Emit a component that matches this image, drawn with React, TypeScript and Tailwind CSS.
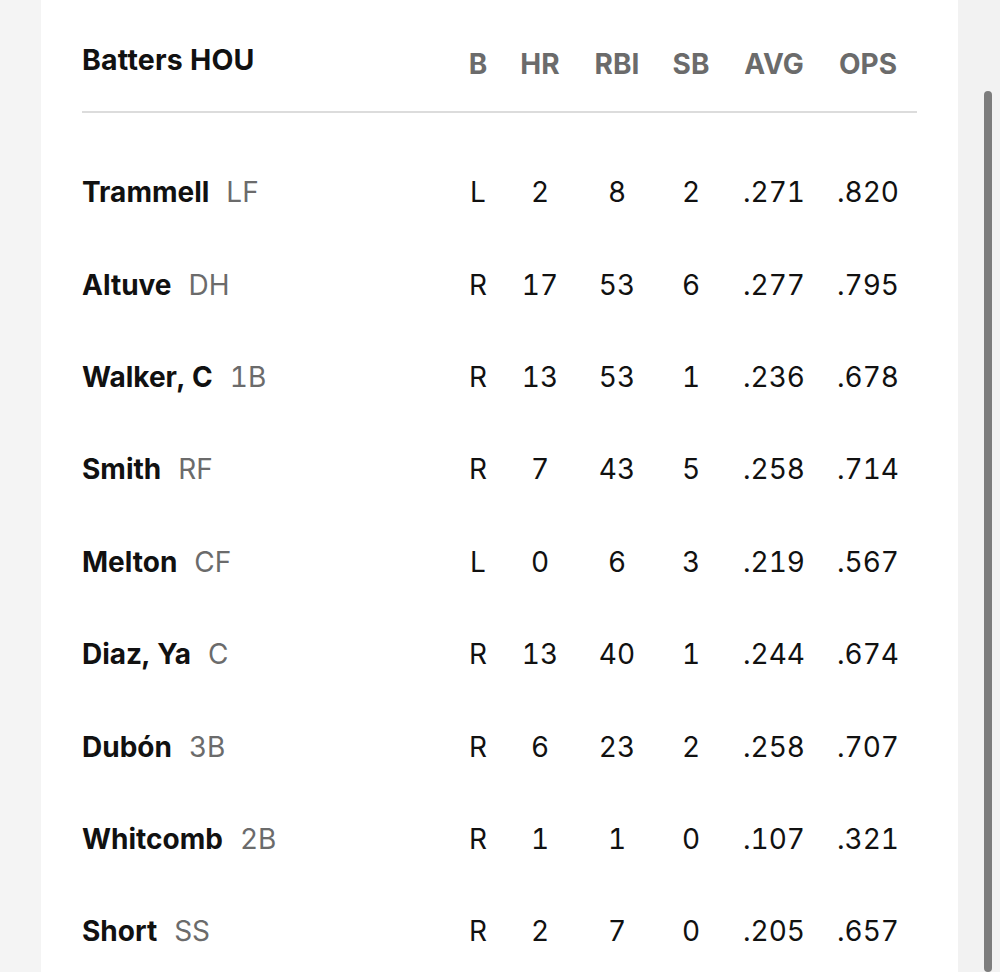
import React from 'react';

interface Batter {
  name: string;
  pos: string;
  b: string;
  hr: number;
  rbi: number;
  sb: number;
  avg: string;
  ops: string;
}

const batters: Batter[] = [
  { name: 'Trammell', pos: 'LF', b: 'L', hr: 2, rbi: 8, sb: 2, avg: '.271', ops: '.820' },
  { name: 'Altuve', pos: 'DH', b: 'R', hr: 17, rbi: 53, sb: 6, avg: '.277', ops: '.795' },
  { name: 'Walker, C', pos: '1B', b: 'R', hr: 13, rbi: 53, sb: 1, avg: '.236', ops: '.678' },
  { name: 'Smith', pos: 'RF', b: 'R', hr: 7, rbi: 43, sb: 5, avg: '.258', ops: '.714' },
  { name: 'Melton', pos: 'CF', b: 'L', hr: 0, rbi: 6, sb: 3, avg: '.219', ops: '.567' },
  { name: 'Diaz, Ya', pos: 'C', b: 'R', hr: 13, rbi: 40, sb: 1, avg: '.244', ops: '.674' },
  { name: 'Dubón', pos: '3B', b: 'R', hr: 6, rbi: 23, sb: 2, avg: '.258', ops: '.707' },
  { name: 'Whitcomb', pos: '2B', b: 'R', hr: 1, rbi: 1, sb: 0, avg: '.107', ops: '.321' },
  { name: 'Short', pos: 'SS', b: 'R', hr: 2, rbi: 7, sb: 0, avg: '.205', ops: '.657' },
];

const cols = 'grid grid-cols-[1fr_42px_82px_72px_76px_90px_98px]';

export default function App() {
  return (
    <div className="relative flex h-[972px] overflow-hidden bg-[#f4f4f4] font-['Inter','Noto_Sans',sans-serif]">
      <div className="ml-[41px] w-[917px] bg-white px-[41px]">
        <div className={`${cols} h-[113px] border-b-2 border-[#dcdcdc] text-[28px] leading-[34px] font-bold`}>
          <div className="pt-[43px] text-[28.5px] tracking-[0.2px] text-[#111]">Batters HOU</div>
          {['B', 'HR', 'RBI', 'SB', 'AVG', 'OPS'].map((h) => (
            <div key={h} className="pt-[47px] text-center text-[#6b6b6b]">
              {h}
            </div>
          ))}
        </div>
        <div className="pt-[33px]">
          {batters.map((p) => (
            <div key={p.name} className={`${cols} h-[92.4px] items-center text-[28px] leading-[34px] text-[#111] tabular-nums`}>
              <div className="flex items-baseline gap-[17px]">
                <span className="font-bold">{p.name}</span>
                <span className="text-[#6b6b6b]">{p.pos}</span>
              </div>
              <div className="text-center">{p.b}</div>
              <div className="text-center">{p.hr}</div>
              <div className="text-center">{p.rbi}</div>
              <div className="text-center">{p.sb}</div>
              <div className="text-center">{p.avg}</div>
              <div className="text-center">{p.ops}</div>
            </div>
          ))}
        </div>
      </div>
      <div className="absolute right-0 top-0 h-full w-[42px] bg-[#f2f2f2]">
        <div className="absolute left-[26px] top-[91px] bottom-0 w-[8px] rounded-full bg-[#7d7d7d]" />
      </div>
    </div>
  );
}
